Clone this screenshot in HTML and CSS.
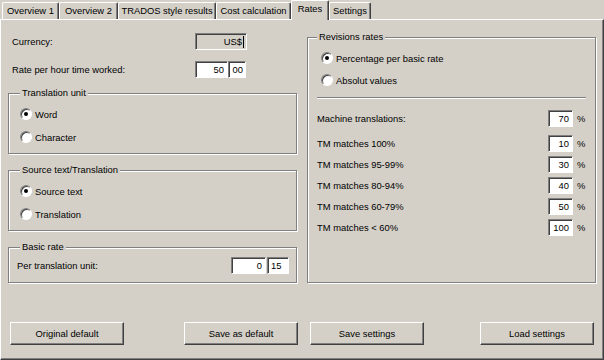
FILE: index.html
```html
<!DOCTYPE html>
<html lang="en">
<head>
    <meta charset="UTF-8">
    <title>Rates</title>
    <link rel="stylesheet" href="styles.css">
</head>
<body>
    <div class="tabs">
        <div class="tab tab-ov1">Overview 1</div>
        <div class="tab tab-ov2">Overview 2</div>
        <div class="tab tab-trados">TRADOS style results</div>
        <div class="tab tab-cost">Cost calculation</div>
        <div class="tab tab-rates active">Rates</div>
        <div class="tab tab-settings">Settings</div>
    </div>

    <div class="panel">
        <div class="columns">
            <div class="col">
                <div class="field-row row-currency">
                    <span class="field-label">Currency:</span>
                    <span class="box box-currency">US$<span class="caret"></span></span>
                </div>
                <div class="field-row row-rate">
                    <span class="field-label">Rate per hour time worked:</span>
                    <span class="box box-50">50</span>
                    <span class="box box-00">00</span>
                </div>

                <div class="group group-unit">
                    <div class="group-title">Translation unit</div>
                    <div class="radio-row"><span class="radio checked"></span>Word</div>
                    <div class="radio-row"><span class="radio"></span>Character</div>
                </div>

                <div class="group group-source">
                    <div class="group-title">Source text/Translation</div>
                    <div class="radio-row"><span class="radio checked"></span>Source text</div>
                    <div class="radio-row"><span class="radio"></span>Translation</div>
                </div>

                <div class="group group-basic">
                    <div class="group-title">Basic rate</div>
                    <div class="basic-row">
                        <span class="basic-label">Per translation unit:</span>
                        <span class="box box-basic-int">0</span>
                        <span class="box box-basic-dec">15</span>
                    </div>
                </div>
            </div>

            <div class="col">
                <div class="group group-revisions">
                    <div class="group-title">Revisions rates</div>
                    <div class="radio-row"><span class="radio checked"></span>Percentage per basic rate</div>
                    <div class="radio-row"><span class="radio"></span>Absolut values</div>
                    <div class="separator"></div>
                    <div class="rate-row"><span class="rate-label">Machine translations:</span><span class="box box-pct">70</span><span class="pct">%</span></div>
                    <div class="rate-row"><span class="rate-label">TM matches 100%</span><span class="box box-pct">10</span><span class="pct">%</span></div>
                    <div class="rate-row"><span class="rate-label">TM matches 95-99%</span><span class="box box-pct">30</span><span class="pct">%</span></div>
                    <div class="rate-row"><span class="rate-label">TM matches 80-94%</span><span class="box box-pct">40</span><span class="pct">%</span></div>
                    <div class="rate-row"><span class="rate-label">TM matches 60-79%</span><span class="box box-pct">50</span><span class="pct">%</span></div>
                    <div class="rate-row"><span class="rate-label">TM matches &lt; 60%</span><span class="box box-pct">100</span><span class="pct">%</span></div>
                </div>
            </div>
        </div>

        <div class="buttons">
            <button class="btn">Original default</button>
            <button class="btn btn-save-default">Save as default</button>
            <button class="btn btn-save">Save settings</button>
            <button class="btn btn-load">Load settings</button>
        </div>
    </div>
</body>
</html>
```

FILE: styles.css
```css
body {
    margin: 0;
    background-color: #d4d0c8;
    font-family: "Liberation Sans", Arial, sans-serif;
    font-size: 9.4px;
    color: #000;
}

/* tab strip */
.tabs {
    display: flex;
    align-items: flex-end;
    height: 19px;
    padding-left: 2px;
}
.tab {
    box-sizing: border-box;
    height: 17px;
    border-top: 1px solid #fff;
    border-left: 1px solid #fff;
    border-right: 1px solid #404040;
    border-radius: 2px 2px 0 0;
    box-shadow: inset -1px 0 0 #808080;
    text-align: center;
    line-height: 15px;
    white-space: nowrap;
}
.tab.active {
    height: 20px;
    margin-bottom: -1px;
    position: relative;
    z-index: 1;
    background-color: #d4d0c8;
}
.tab-ov1 { width: 57px; }
.tab-ov2 { width: 59px; }
.tab-trados { width: 98px; }
.tab-cost { width: 75px; }
.tab-rates { width: 38px; }
.tab-settings { width: 42px; }

.panel {
    box-sizing: border-box;
    height: 341px;
    border-top: 1px solid #fff;
    border-left: 1px solid #fff;
    border-right: 1px solid #404040;
    border-bottom: 1px solid #404040;
    box-shadow: inset -1px -1px 0 #808080;
}
.columns {
    display: grid;
    grid-template-columns: 289px 289px;
    column-gap: 10px;
    padding-left: 7px;
}
.col {
    display: flex;
    flex-direction: column;
}

/* plain fields */
.field-row {
    display: flex;
    align-items: center;
    height: 17px;
    padding-left: 4px;
}
.row-currency { margin-top: 13px; }
.row-rate { margin-top: 11px; }
.field-label { width: 183px; }

.box {
    box-sizing: border-box;
    height: 17px;
    background-color: #fff;
    border: 1px solid;
    border-color: #808080 #fff #fff #808080;
    box-shadow: inset 1px 1px 0 #404040;
    text-align: right;
    padding-right: 3px;
    line-height: 15px;
}
.box-currency {
    display: flex;
    justify-content: flex-end;
    align-items: center;
    width: 52px;
    background-color: #d4d0c8;
    padding-right: 2px;
}
.caret {
    width: 1px;
    height: 12px;
    margin-left: 1px;
    background-color: #000;
}
.box-50 { width: 33px; }
.box-00 { width: 18px; padding-right: 2px; }

/* group boxes */
.group {
    box-sizing: border-box;
    border: 1px solid #808080;
    box-shadow: inset 1px 1px 0 #fff, 1px 1px 0 #fff;
    padding-left: 11px;
}
.group-title {
    width: fit-content;
    height: 12px;
    margin-top: -7px;
    padding: 0 2px;
    background-color: #d4d0c8;
    line-height: 12px;
}
.group-unit { margin-top: 15px; height: 61px; }
.group-source { margin-top: 16px; height: 61px; }
.group-basic { margin-top: 16px; height: 36px; }

.radio-row {
    display: flex;
    align-items: center;
    height: 16px;
    margin-top: 7px;
}
.radio {
    box-sizing: border-box;
    display: flex;
    align-items: center;
    justify-content: center;
    width: 12px;
    height: 12px;
    margin-right: 3px;
    border-radius: 50%;
    border: 1px solid;
    border-color: #808080 #fff #fff #808080;
    box-shadow: inset 1px 1px 0 #404040;
    background-color: #fff;
}
.radio.checked::after {
    content: "";
    width: 4px;
    height: 4px;
    border-radius: 50%;
    background-color: #000;
}

.basic-row {
    display: flex;
    align-items: center;
    height: 17px;
    margin: 4px 7px 0 -3px;
}
.basic-label { flex: 1; }
.box-basic-int { width: 35px; margin-right: 1px; }
.box-basic-dec { width: 22px; text-align: left; padding-left: 3px; }

/* revisions */
.group-revisions {
    margin-top: 17px;
    height: 246px;
    padding: 0 6px 0 9px;
}
.group-revisions .radio-row { padding-left: 4px; }
.group-revisions .radio-row + .radio-row { margin-top: 6px; }
.separator {
    margin: 9px 3px 0 0;
    border-top: 1px solid #808080;
    border-bottom: 1px solid #fff;
}
.rate-row {
    display: flex;
    align-items: center;
    height: 17px;
    margin-top: 4px;
}
.separator + .rate-row { margin-top: 11px; }
.separator + .rate-row + .rate-row { margin-top: 8px; }
.rate-label { flex: 1; }
.box-pct { width: 25px; }
.pct {
    box-sizing: border-box;
    width: 16px;
    padding-left: 4px;
}

/* bottom buttons */
.buttons {
    display: flex;
    margin-top: 39px;
    padding-left: 9px;
}
.btn {
    box-sizing: border-box;
    width: 114px;
    height: 23px;
    padding: 0;
    border: 1px solid;
    border-color: #fff #404040 #404040 #fff;
    box-shadow: inset -1px -1px 0 #808080;
    background-color: #d4d0c8;
    font: inherit;
    color: #000;
}
.btn-save-default { margin-left: 60px; }
.btn-save { margin-left: 12px; }
.btn-load { margin-left: 56px; }
```
